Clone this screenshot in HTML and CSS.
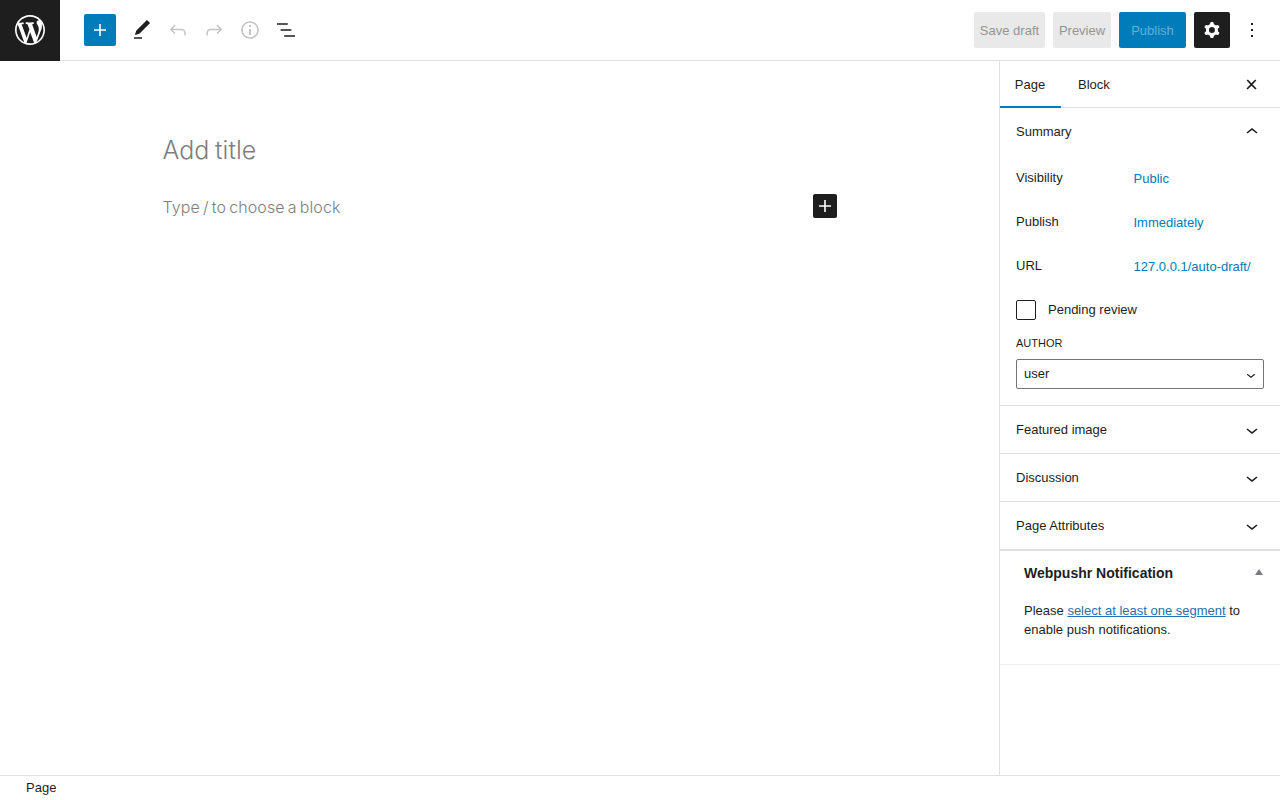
FILE: index.html
```html
<!DOCTYPE html>
<html lang="en">
<head>
<meta charset="utf-8">
<title>Add New Page</title>
<link rel="stylesheet" href="styles.css">
</head>
<body>
<div class="app">
  <header class="topbar">
    <a class="logo" href="#"><svg width="36" height="36" viewBox="-2 -2 24 24"><path fill="#fff" d="M20 10c0-5.51-4.49-10-10-10C4.48 0 0 4.49 0 10c0 5.52 4.48 10 10 10 5.51 0 10-4.48 10-10zM7.78 15.37L4.37 6.22c.55-.02 1.17-.08 1.17-.08.5-.06.44-1.13-.06-1.11 0 0-1.45.11-2.37.11-.18 0-.37 0-.58-.01C4.12 2.69 6.87 1.11 10 1.11c2.33 0 4.45.87 6.05 2.34-.68-.11-1.65.39-1.65 1.58 0 .74.45 1.36.9 2.1.35.61.55 1.36.55 2.46 0 1.49-1.4 5-1.4 5l-3.03-8.37c.54-.02.82-.17.82-.17.5-.05.44-1.25-.06-1.22 0 0-1.44.12-2.38.12-.87 0-2.33-.12-2.33-.12-.5-.03-.56 1.2-.06 1.22l.92.08 1.26 3.41zM17.41 10c.24-.64.74-1.87.43-4.25.7 1.29 1.05 2.71 1.05 4.25 0 3.29-1.73 6.24-4.4 7.78.97-2.59 1.94-5.2 2.92-7.78zM6.1 18.09C3.12 16.65 1.11 13.53 1.11 10c0-1.3.23-2.48.72-3.59C3.25 10.3 4.67 14.2 6.1 18.09zm4.03-6.63l2.58 6.98c-.86.29-1.76.45-2.71.45-.79 0-1.57-.11-2.29-.33.81-2.38 1.62-4.74 2.42-7.1z"/></svg></a>
    <div class="tools">
      <button class="inserter"><svg width="24" height="24" viewBox="0 0 24 24"><path fill="#fff" d="M18 11.2h-5.2V6h-1.6v5.2H6v1.6h5.2V18h1.6v-5.2H18z"/></svg></button>
      <button class="tool"><svg width="24" height="24" viewBox="0 0 24 24"><path fill="#1e1e1e" d="M20.1 5.1L16.9 2 6.2 12.7l-1.3 4.4 4.5-1.3L20.1 5.1zM4 20.8h8v-1.5H4v1.5z"/></svg></button>
      <button class="tool"><svg width="24" height="24" viewBox="0 0 24 24"><path fill="#c4c4c4" d="M18.3 11.7c-.6-.6-1.4-.9-2.3-.9H6.7l2.9-3.3-1.1-1-4.5 5L8.5 16l1-1-2.7-2.7H16c.5 0 .9.2 1.3.5 1 1 1 3.4 1 4.5v.3h1.5v-.2c0-1.5 0-4.3-1.5-5.7z"/></svg></button>
      <button class="tool"><svg width="24" height="24" viewBox="0 0 24 24"><path fill="#c4c4c4" d="M15.6 6.5l-1.1 1 2.9 3.3H8c-.9 0-1.7.3-2.3.9-1.4 1.5-1.4 4.2-1.4 5.6v.2h1.5v-.3c0-1.1 0-3.5 1-4.5.3-.3.7-.5 1.3-.5h9.2L14.5 15l1.1 1.1 4.6-4.6-4.6-5z"/></svg></button>
      <button class="tool"><svg width="24" height="24" viewBox="0 0 24 24"><path fill="#c4c4c4" d="M12 3.2c-4.8 0-8.8 3.9-8.8 8.8 0 4.8 3.9 8.8 8.8 8.8 4.8 0 8.8-3.9 8.8-8.8 0-4.8-4-8.8-8.8-8.8zm0 16c-4 0-7.2-3.3-7.2-7.2C4.8 8 8 4.8 12 4.8s7.2 3.3 7.2 7.2c0 4-3.2 7.2-7.2 7.2zM11 17h2v-6h-2v6zm0-8h2V7h-2v2z"/></svg></button>
      <button class="tool"><svg width="24" height="24" viewBox="0 0 24 24"><path fill="#1e1e1e" d="M13.8 5.2H3v1.5h10.8V5.2zm-3.6 12v1.5H21v-1.5H10.2zm7.2-6H6.6v1.5h10.8v-1.5z"/></svg></button>
    </div>
    <div class="actions">
      <button class="btn btn-muted btn-save">Save draft</button>
      <button class="btn btn-muted btn-preview">Preview</button>
      <button class="btn btn-publish">Publish</button>
      <button class="settings"><svg width="24" height="24" viewBox="0 0 24 24"><path fill="#fff" fill-rule="evenodd" d="M10.289 4.836A1 1 0 0111.275 4h1.306a1 1 0 01.987.836l.244 1.466c.787.26 1.503.679 2.108 1.218l1.393-.522a1 1 0 011.216.437l.653 1.13a1 1 0 01-.23 1.273l-1.148.944a6.025 6.025 0 010 2.435l1.149.946a1 1 0 01.23 1.272l-.653 1.13a1 1 0 01-1.216.437l-1.394-.522c-.605.54-1.32.958-2.108 1.218l-.244 1.466a1 1 0 01-.987.836h-1.306a1 1 0 01-.986-.836l-.244-1.466a5.995 5.995 0 01-2.108-1.218l-1.394.522a1 1 0 01-1.217-.436l-.653-1.131a1 1 0 01.23-1.272l1.149-.946a6.026 6.026 0 010-2.435l-1.148-.944a1 1 0 01-.23-1.272l.653-1.131a1 1 0 011.217-.437l1.393.522a5.994 5.994 0 012.108-1.218l.244-1.466zM14.929 12a3 3 0 11-6 0 3 3 0 016 0z"/></svg></button>
      <button class="more"><svg width="24" height="24" viewBox="0 0 24 24"><path fill="#1e1e1e" d="M13 19h-2v-2h2v2zm0-6h-2v-2h2v2zm0-6h-2V5h2v2z"/></svg></button>
    </div>
  </header>

  <div class="workspace">
    <main class="editor">
      <div class="canvas">
        <h1 class="title">Add title</h1>
        <div class="block-row">
          <p class="placeholder">Type / to choose a block</p>
          <button class="block-add"><svg width="24" height="24" viewBox="0 0 24 24"><path fill="#fff" d="M18 11.2h-5.2V6h-1.6v5.2H6v1.6h5.2V18h1.6v-5.2H18z"/></svg></button>
        </div>
      </div>
    </main>

    <aside class="sidebar">
      <div class="tabs">
        <button class="tab tab-active">Page</button>
        <button class="tab">Block</button>
        <button class="tab-close"><svg width="27" height="27" viewBox="0 0 24 24"><path fill="#1e1e1e" d="M13 11.9l3.3-3.4-1.1-1-3.2 3.4-3.2-3.4-1.1 1 3.3 3.4-3.5 3.6 1 1L12 13l3.5 3.5 1-1z"/></svg></button>
      </div>

      <section class="panel panel-open">
        <div class="panel-head"><span>Summary</span><svg width="24" height="24" viewBox="0 0 24 24"><path fill="#1e1e1e" d="M6.5 12.4L12 8l5.5 4.4-.9 1.2L12 10l-4.5 3.6-1-1.2z"/></svg></div>
        <div class="rows">
          <div class="row"><span class="row-label">Visibility</span><a class="row-value" href="#">Public</a></div>
          <div class="row"><span class="row-label">Publish</span><a class="row-value" href="#">Immediately</a></div>
          <div class="row"><span class="row-label">URL</span><a class="row-value" href="#">127.0.0.1/auto-draft/</a></div>
        </div>
        <label class="check"><span class="box"></span><span class="check-text">Pending review</span></label>
        <div class="author-label">AUTHOR</div>
        <div class="select"><span>user</span><svg width="18" height="18" viewBox="0 0 24 24"><path fill="#1e1e1e" d="M17.5 11.6L12 16l-5.5-4.4.9-1.2L12 14l4.5-3.6 1 1.2z"/></svg></div>
      </section>

      <section class="panel"><div class="panel-head"><span>Featured image</span><svg width="24" height="24" viewBox="0 0 24 24"><path fill="#1e1e1e" d="M17.5 11.6L12 16l-5.5-4.4.9-1.2L12 14l4.5-3.6 1 1.2z"/></svg></div></section>
      <section class="panel"><div class="panel-head"><span>Discussion</span><svg width="24" height="24" viewBox="0 0 24 24"><path fill="#1e1e1e" d="M17.5 11.6L12 16l-5.5-4.4.9-1.2L12 14l4.5-3.6 1 1.2z"/></svg></div></section>
      <section class="panel"><div class="panel-head"><span>Page Attributes</span><svg width="24" height="24" viewBox="0 0 24 24"><path fill="#1e1e1e" d="M17.5 11.6L12 16l-5.5-4.4.9-1.2L12 14l4.5-3.6 1 1.2z"/></svg></div></section>

      <section class="metabox">
        <div class="metabox-head"><h2>Webpushr Notification</h2><span class="caret"></span></div>
        <p>Please <a href="#">select at least one segment</a> to enable push notifications.</p>
      </section>
    </aside>
  </div>

  <footer class="footer"><span>Page</span></footer>
</div>
</body>
</html>
```

FILE: styles.css
```css
* { box-sizing: border-box; }
html, body { margin: 0; height: 100%; }
body { font-family: "Liberation Sans", Arial, sans-serif; font-size: 13px; color: #1e1e1e; background: #fff; overflow: hidden; }
button { font: inherit; border: 0; background: none; padding: 0; margin: 0; display: flex; align-items: center; justify-content: center; }
svg { display: block; flex: none; }
.app { display: flex; flex-direction: column; height: 800px; }

.topbar { height: 61px; flex: none; display: flex; align-items: flex-start; border-bottom: 1px solid #e0e0e0; }
.logo { width: 60px; height: 61px; background: #1e1e1e; display: flex; align-items: center; justify-content: center; padding-bottom: 1px; }
.tools { display: flex; align-items: center; height: 60px; margin-left: 24px; gap: 0; }
.inserter { width: 32px; height: 32px; background: #007cba; border-radius: 2px; margin-right: 8px; }
.tool { width: 36px; height: 36px; }
.actions { margin-left: auto; display: flex; align-items: center; height: 60px; padding-right: 10px; }
.btn { height: 36px; border-radius: 2px; }
.btn-muted { background: #e9e9e9; color: #949494; }
.btn-save { width: 71px; margin-right: 8px; }
.btn-preview { width: 58px; margin-right: 8px; }
.btn-publish { width: 67px; background: #007cba; color: #66b0d6; margin-right: 8px; }
.settings { width: 36px; height: 36px; background: #1e1e1e; border-radius: 2px; margin-right: 4px; }
.more { width: 36px; height: 36px; }

.workspace { flex: 1; min-height: 0; display: flex; }
.editor { flex: 1; min-width: 0; }
.canvas { width: 674px; margin: 0 auto; padding-top: 69px; }
.title { margin: 0; font-family: Inter, sans-serif; font-weight: 300; font-size: 25px; letter-spacing: .05px; word-spacing: -1.5px; line-height: 40px; color: #7e7e7e; }
.block-row { display: flex; align-items: center; justify-content: space-between; margin-top: 20px; height: 32px; }
.placeholder { margin: 0; padding-top: 2px; font-family: Inter, sans-serif; font-weight: 300; font-size: 16px; letter-spacing: .1px; word-spacing: -1.5px; color: #7e7e7e; }
.block-add { width: 24px; height: 24px; background: #1e1e1e; border-radius: 2px; }

.sidebar { width: 281px; flex: none; border-left: 1px solid #e0e0e0; }
.tabs { height: 47px; display: flex; align-items: stretch; border-bottom: 1px solid #e0e0e0; position: relative; }
.tab { padding: 0 16px 1px 15px; height: 47px; color: #1e1e1e; }
.tab + .tab { padding: 0 16px 1px 17px; }
.tab-active { position: relative; width: 61px; box-shadow: inset 0 -2px 0 #007cba; height: 47px; }
.tab-close { margin-left: auto; width: 36px; height: 46px; margin-right: 11px; }

.panel { border-bottom: 1px solid #e0e0e0; }
.panel-head { height: 47px; display: flex; align-items: center; justify-content: space-between; padding: 0 16px; }
.panel-head svg { margin-top: 1px; }
.panel-open { height: 298px; }
.rows { padding-top: 1px; }
.row { height: 44px; display: flex; align-items: center; padding-left: 16px; padding-bottom: 1px; }
.row-label { width: 117.5px; }
.row-value { color: #007cba; text-decoration: none; padding-top: 1px; }
.check { display: flex; align-items: center; gap: 12px; padding-left: 16px; height: 20px; margin-top: 12px; }
.check-text { margin-top: -1px; }
.box { width: 20px; height: 20px; border: 1px solid #1e1e1e; border-radius: 2px; }
.author-label { font-size: 11px; margin: 16px 0 0 16px; line-height: 14px; }
.select { margin: 9px 16px 0; height: 30px; border: 1px solid #757575; border-radius: 2px; display: flex; align-items: center; justify-content: space-between; padding: 0 3px 1px 7px; }
.select svg { margin-top: 2px; }

.metabox { border-top: 1px solid #e0e0e0; border-bottom: 1px solid #f0f0f0; height: 115px; margin-top: 0; padding: 0 21px 0 24px; }
.metabox-head { display: flex; justify-content: space-between; align-items: center; height: 44px; position: relative; }
.metabox-head h2 { margin: 0; font-size: 14px; font-weight: 700; }
.caret { width: 0; height: 0; border-left: 4px solid transparent; border-right: 4px solid transparent; border-bottom: 6px solid #787c82; margin-bottom: 3px; margin-right: -4px; }
.metabox p { margin: 6px 0 0; line-height: 19px; }
.metabox a { color: #2271b1; text-decoration: underline; }

.footer { height: 25px; flex: none; border-top: 1px solid #e0e0e0; padding: 0 0 2px 26px; display: flex; align-items: center; }
```
